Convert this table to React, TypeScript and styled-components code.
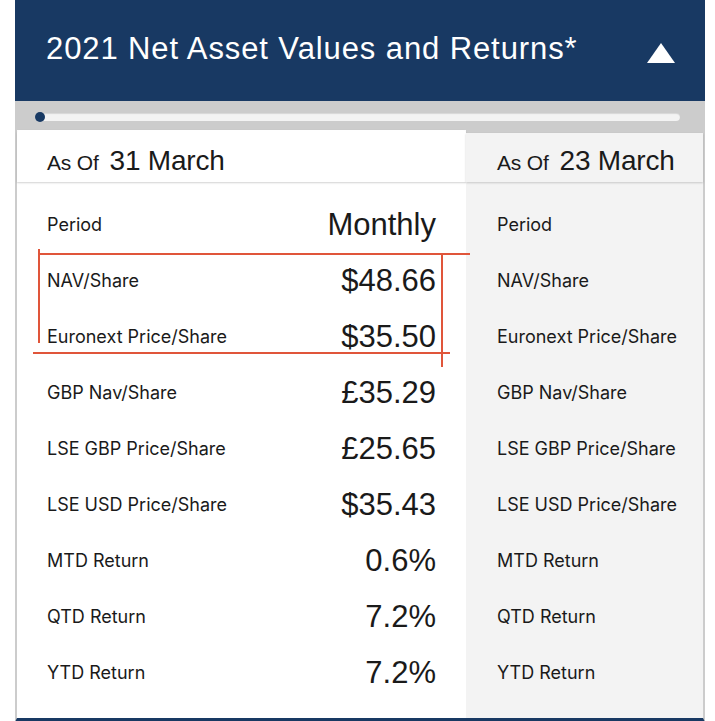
import React from "react";
import styled, { createGlobalStyle } from "styled-components";

const rows = [
  { label: "NAV/Share", value: "$48.66" },
  { label: "Euronext Price/Share", value: "$35.50" },
  { label: "GBP Nav/Share", value: "£35.29" },
  { label: "LSE GBP Price/Share", value: "£25.65" },
  { label: "LSE USD Price/Share", value: "$35.43" },
  { label: "MTD Return", value: "0.6%" },
  { label: "QTD Return", value: "7.2%" },
  { label: "YTD Return", value: "7.2%" },
];

function App() {
  return (
    <>
      <GlobalStyle />
      <Panel>
        <Header>
          <Title>2021 Net Asset Values and Returns*</Title>
          <Toggle aria-label="collapse" />
        </Header>
        <ScrollStrip>
          <Track>
            <Thumb />
          </Track>
        </ScrollStrip>
        <Columns>
          <Column>
            <DateCard>
              <AsOf>As Of</AsOf>
              <DateText>31 March</DateText>
            </DateCard>
            <Row>
              <Label>Period</Label>
              <Value>Monthly</Value>
            </Row>
            {rows.map((r) => (
              <Row key={r.label}>
                <Label>{r.label}</Label>
                <Value>{r.value}</Value>
              </Row>
            ))}
          </Column>
          <Column $shade>
            <DateCard $shade>
              <AsOf>As Of</AsOf>
              <DateText>23 March</DateText>
            </DateCard>
            <Row $shade>
              <Label>Period</Label>
            </Row>
            {rows.map((r) => (
              <Row $shade key={r.label}>
                <Label>{r.label}</Label>
              </Row>
            ))}
          </Column>

          {/* red markup drawn over the table */}
          <Mark style={{ top: 123, left: 21, width: 432, height: 2 }} />
          <Mark style={{ top: 119, left: 21, width: 2, height: 94 }} />
          <Mark style={{ top: 222, left: 16, width: 417, height: 2 }} />
          <Mark style={{ top: 125, left: 424, width: 2, height: 112 }} />
        </Columns>
      </Panel>
    </>
  );
}

export default App;

const GlobalStyle = createGlobalStyle`
  body {
    margin: 0;
    background: #ffffff;
    font-family: "Inter", "Liberation Sans", sans-serif;
    color: #1a1a1a;
  }
`;

const Panel = styled.div`
  margin-left: 15px;
  width: 690px;
`;

const Header = styled.div`
  height: 101px;
  background: #183963;
  display: flex;
  align-items: center;
  justify-content: space-between;
  padding: 0 30px 0 31px;
  box-sizing: border-box;
`;

const Title = styled.h1`
  margin: 0 0 4px;
  font-family: "Liberation Sans", Arial, sans-serif;
  font-weight: 400;
  font-size: 31px;
  letter-spacing: 0.9px;
  color: #ffffff;
`;

const Toggle = styled.button`
  width: 0;
  height: 0;
  padding: 0;
  border: none;
  background: none;
  border-left: 14px solid transparent;
  border-right: 14px solid transparent;
  border-bottom: 20px solid #ffffff;
  margin-top: 4px;
`;

const ScrollStrip = styled.div`
  height: 29px;
  background: #cccccc;
  display: flex;
  align-items: center;
  padding: 0 25px 0 20px;
  box-sizing: border-box;
`;

const Track = styled.div`
  flex: 1;
  height: 8px;
  margin-top: 3px;
  border-radius: 4px;
  background: #f3f3f3;
  box-shadow: inset 0 1px 1px rgba(0, 0, 0, 0.12);
  display: flex;
  align-items: center;
`;

const Thumb = styled.div`
  width: 10px;
  height: 10px;
  border-radius: 50%;
  background: #183963;
`;

const Columns = styled.div`
  position: relative;
  display: grid;
  grid-template-columns: 449px 1fr;
  border-left: 2px solid #cccccc;
  border-right: 2px solid #cccccc;
  border-bottom: 4px solid #183963;
  background: #cccccc;
`;

const Column = styled.div<{ $shade?: boolean }>`
  background: ${(p) => (p.$shade ? "#f3f3f3" : "#ffffff")};
  padding-bottom: 18px;
  ${(p) => (p.$shade ? "margin-top: 3px;" : "")}
`;

const DateCard = styled.div<{ $shade?: boolean }>`
  height: ${(p) => (p.$shade ? "49px" : "52px")};
  display: flex;
  align-items: baseline;
  gap: 11px;
  padding: ${(p) => (p.$shade ? "12px 0 0 31px" : "15px 0 0 30px")};
  box-sizing: border-box;
  background: ${(p) => (p.$shade ? "#f3f3f3" : "#ffffff")};
  border-radius: ${(p) => (p.$shade ? "0" : "3px 3px 0 0")};
  box-shadow: 0 1px 2px rgba(0, 0, 0, 0.18);
  margin-bottom: 14px;
`;

const AsOf = styled.span`
  font-family: "Liberation Sans", Arial, sans-serif;
  font-size: 21px;
  letter-spacing: -0.2px;
`;

const DateText = styled.span`
  font-family: "Liberation Sans", Arial, sans-serif;
  font-size: 28px;
  letter-spacing: -0.2px;
`;

const Row = styled.div<{ $shade?: boolean }>`
  height: 56px;
  display: flex;
  align-items: center;
  justify-content: space-between;
  padding: ${(p) => (p.$shade ? "0 20px 0 31px" : "0 30px")};
`;

const Label = styled.span`
  font-size: 18px;
  letter-spacing: 0;
  margin-top: 1px;
`;

const Value = styled.span`
  font-family: "Liberation Sans", Arial, sans-serif;
  font-size: 31px;
  margin-top: 1px;
`;

const Mark = styled.span`
  position: absolute;
  background: #e0553a;
`;
